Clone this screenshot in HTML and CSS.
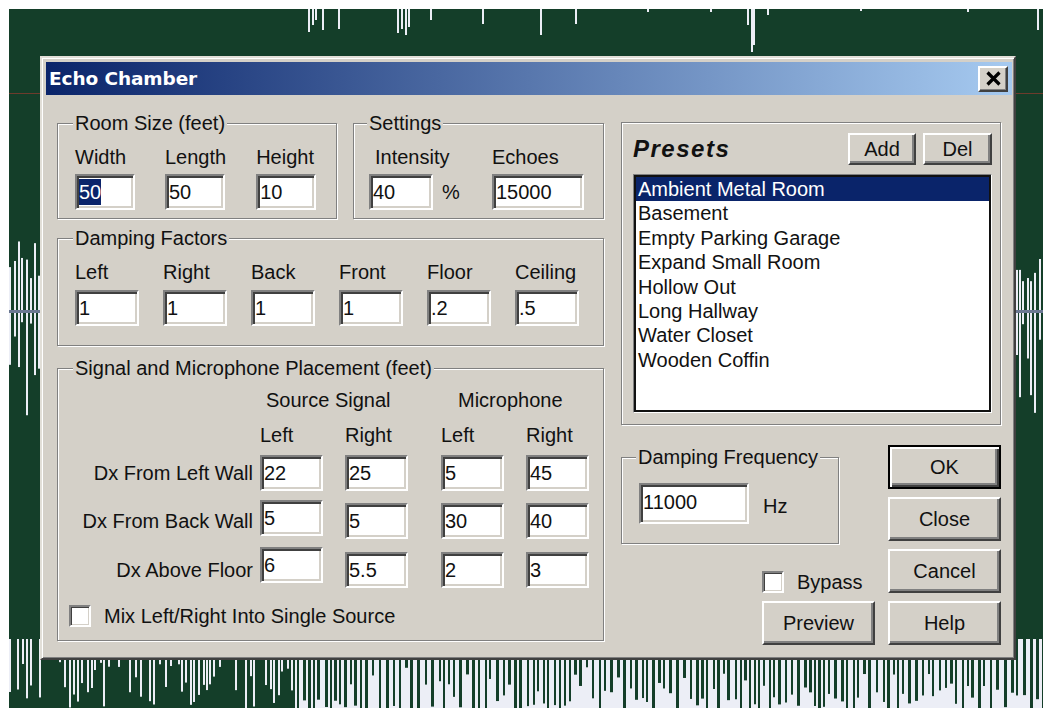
FILE: index.html
```html
<!DOCTYPE html>
<html lang="en">
<head>
<meta charset="utf-8">
<title>Echo Chamber</title>
<link rel="stylesheet" href="styles.css">
</head>
<body>
<div class="desktop">
  <svg id="wave" class="wave" width="1034" height="699" viewBox="0 0 1034 699"></svg>

  <div class="window">
    <div class="titlebar">
      <span class="title">Echo Chamber</span>
      <span class="close">
        <svg width="17" height="15" viewBox="0 0 17 15"><path d="M2.5 1.5L14.5 13.5M14.5 1.5L2.5 13.5" stroke="#000" stroke-width="3.2"/></svg>
      </span>
    </div>

    <div class="content">
      <div class="left">
        <div class="toprow">
          <fieldset class="group room">
            <legend>Room Size (feet)</legend>
            <div class="trio">
              <div class="fld"><span class="lbl">Width</span><span class="edit w60"><span class="sel">50</span></span></div>
              <div class="fld"><span class="lbl">Length</span><span class="edit w60">50</span></div>
              <div class="fld"><span class="lbl">Height</span><span class="edit w60">10</span></div>
            </div>
          </fieldset>

          <fieldset class="group settings">
            <legend>Settings</legend>
            <div class="sgrid">
              <span class="lbl ind">Intensity</span><span></span><span class="lbl">Echoes</span>
              <span class="edit w64">40</span><span class="unit">%</span><span class="edit w92">15000</span>
            </div>
          </fieldset>
        </div>

        <fieldset class="group damping">
          <legend>Damping Factors</legend>
          <div class="six">
            <div class="fld"><span class="lbl">Left</span><span class="edit w64">1</span></div>
            <div class="fld"><span class="lbl">Right</span><span class="edit w64">1</span></div>
            <div class="fld"><span class="lbl">Back</span><span class="edit w64">1</span></div>
            <div class="fld"><span class="lbl">Front</span><span class="edit w64">1</span></div>
            <div class="fld"><span class="lbl">Floor</span><span class="edit w64">.2</span></div>
            <div class="fld"><span class="lbl">Ceiling</span><span class="edit w64">.5</span></div>
          </div>
        </fieldset>

        <fieldset class="group placement">
          <legend>Signal and Microphone Placement (feet)</legend>
          <div class="ptable">
            <span></span><span class="head src">Source Signal</span><span class="head mic">Microphone</span>

            <span></span><span class="lbl">Left</span><span class="lbl">Right</span><span class="lbl">Left</span><span class="lbl">Right</span>

            <span class="rl">Dx From Left Wall</span>
            <span class="edit w63">22</span><span class="edit w63">25</span><span class="edit w63">5</span><span class="edit w63">45</span>

            <span class="rl">Dx From Back Wall</span>
            <span class="edit w63 up3">5</span><span class="edit w63">5</span><span class="edit w63">30</span><span class="edit w63">40</span>

            <span class="rl">Dx Above Floor</span>
            <span class="edit w63 up5">6</span><span class="edit w63">5.5</span><span class="edit w63">2</span><span class="edit w63">3</span>
          </div>
          <div class="check mix"><span class="box"></span><span>Mix Left/Right Into Single Source</span></div>
        </fieldset>
      </div>

      <div class="right">
        <div class="presets">
          <div class="phead">
            <span class="ptitle">Presets</span>
            <button class="btn add">Add</button>
            <button class="btn del">Del</button>
          </div>
          <ul class="list">
            <li class="on">Ambient Metal Room</li>
            <li>Basement</li>
            <li>Empty Parking Garage</li>
            <li>Expand Small Room</li>
            <li>Hollow Out</li>
            <li>Long Hallway</li>
            <li>Water Closet</li>
            <li>Wooden Coffin</li>
          </ul>
        </div>

        <div class="lower">
          <div class="lowleft">
            <fieldset class="group freq">
              <legend>Damping Frequency</legend>
              <div class="frow"><span class="edit w110">11000</span><span class="hz">Hz</span></div>
            </fieldset>
            <div class="check bypass"><span class="box"></span><span>Bypass</span></div>
            <button class="btn preview">Preview</button>
          </div>
          <div class="actions">
            <button class="btn default">OK</button>
            <button class="btn">Close</button>
            <button class="btn">Cancel</button>
            <button class="btn">Help</button>
          </div>
        </div>
      </div>
    </div>
  </div>
</div>
<script src="wave.js"></script>
</body>
</html>
```

FILE: styles.css
```css
* { box-sizing: border-box; }

html, body {
  margin: 0;
  background: #fff;
}

body {
  font-family: "Liberation Sans", Arial, sans-serif;
  font-size: 20px;
  color: #111;
}

/* waveform track behind the dialog */
.desktop {
  position: relative;
  width: 1034px;
  height: 699px;
  margin: 9px 0 0 9px;
  background: #143e29;
  overflow: hidden;
}

.wave { display: block; }

/* dialog window */
.window {
  position: absolute;
  left: 31px;
  top: 47px;
  width: 976px;
  height: 604px;
  display: flex;
  flex-direction: column;
  background: #d4d0c8;
  border: 2px solid;
  border-color: #e2dfd8 #404040 #404040 #e2dfd8;
  box-shadow: inset 1px 1px 0 #fff, inset -1px -1px 0 #808080;
  padding: 4px 2px 2px 4px;
}

.titlebar {
  height: 33px;
  flex: none;
  display: flex;
  align-items: center;
  justify-content: space-between;
  padding: 0 4px 0 3px;
  background: linear-gradient(to right, #0a246a, #a6caf0);
}

.title {
  color: #fff;
  font-family: "DejaVu Sans", sans-serif;
  font-weight: bold;
  font-size: 18.5px;
  letter-spacing: -0.1px;
}

.close {
  width: 30px;
  height: 26px;
  display: flex;
  align-items: center;
  justify-content: center;
  background: #d4d0c8;
  border: 2px solid;
  border-color: #fff #404040 #404040 #fff;
  box-shadow: inset -1px -1px 0 #808080;
}

.content {
  display: flex;
  gap: 17px;
  padding: 17px 0 0 11px;
}

.left {
  width: 547px;
  display: flex;
  flex-direction: column;
}

.toprow {
  display: flex;
  gap: 16px;
}

/* etched group boxes */
.group {
  margin: 0;
  min-width: 0;
  border: 1px solid #808080;
  box-shadow: inset 1px 1px 0 #fff, 1px 1px 0 #fff;
  padding: 12px 0 0 17px;
}

.group > legend {
  padding: 0 2px;
  margin-left: -2px;
  line-height: 22px;
  background: #d4d0c8;
  white-space: nowrap;
}

.lbl {
  display: block;
  line-height: 22px;
  white-space: nowrap;
}

/* sunken edit fields */
.edit {
  display: block;
  height: 36px;
  background: #fff;
  border: 2px solid;
  border-color: #808080 #fff #fff #808080;
  box-shadow: inset 2px 2px 0 #404040, inset -2px -2px 0 #d4d0c8;
  padding-left: 2px;
  line-height: 32px;
  white-space: nowrap;
  overflow: hidden;
}

.w60 { width: 60px; }
.w63 { width: 63px; }
.w64 { width: 64px; }
.w92 { width: 92px; }
.w110 { width: 110px; height: 41px; line-height: 35px; }

.sel {
  display: inline-block;
  background: #0a246a;
  color: #fff;
  line-height: 26px;
  vertical-align: middle;
  margin-top: -3px;
}

.room { width: 280px; height: 107px; }
.settings { width: 251px; height: 107px; padding-left: 15px; }

.trio {
  display: flex;
  gap: 30px;
}

.fld {
  display: flex;
  flex-direction: column;
  gap: 6px;
}

.sgrid {
  display: grid;
  grid-template-columns: 64px 59px 92px;
  row-gap: 6px;
}

.ind { margin-left: 6px; }

.unit {
  align-self: center;
  padding-left: 9px;
}

.damping {
  width: 547px;
  height: 119px;
  margin-top: 8px;
}

.damping .fld { gap: 7px; }

.six {
  display: grid;
  grid-template-columns: repeat(6, 64px);
  column-gap: 24px;
}

.placement {
  width: 547px;
  height: 284px;
  margin-top: 11px;
  padding-top: 10px;
}

.ptable {
  display: grid;
  grid-template-columns: 185px 85px 96px 85px 63px;
  grid-template-rows: 35px 31px 48px 49px 35px;
  align-items: start;
}

.head { line-height: 22px; white-space: nowrap; }
.src { grid-column: span 2; padding-left: 6px; }
.mic { grid-column: span 2; padding-left: 17px; }

.rl {
  text-align: right;
  padding-right: 7px;
  line-height: 36px;
  white-space: nowrap;
}

.up3 { margin-top: -3px; }
.up5 { margin-top: -5px; }

/* check boxes */
.check {
  display: flex;
  align-items: center;
  gap: 13px;
  line-height: 22px;
}

.box {
  width: 22px;
  height: 22px;
  flex: none;
  background: #fff;
  border: 2px solid;
  border-color: #808080 #fff #fff #808080;
  box-shadow: inset 1px 1px 0 #404040, inset -1px -1px 0 #d4d0c8;
}

.mix { margin: 18px 0 0 -6px; }

/* right column */
.right {
  width: 380px;
  margin-top: 10px;
}

.presets {
  height: 303px;
  border: 1px solid #808080;
  box-shadow: inset 1px 1px 0 #fff, 1px 1px 0 #fff;
  padding: 10px 8px 10px 11px;
}

.phead {
  height: 32px;
  display: flex;
  align-items: center;
  gap: 7px;
}

.ptitle {
  margin-right: auto;
  font-weight: bold;
  font-style: italic;
  font-size: 24px;
  letter-spacing: 1.5px;
}

.btn {
  font: inherit;
  color: #111;
  margin: 0;
  padding: 0;
  background: #d4d0c8;
  border: 2px solid;
  border-color: #fff #404040 #404040 #fff;
  box-shadow: inset -2px -2px 0 #808080;
  text-align: center;
}

.add { width: 68px; height: 32px; }
.del { width: 69px; height: 32px; }

.list {
  list-style: none;
  margin: 9px 0 0;
  padding: 2px;
  height: 239px;
  background: #fff;
  border: 1px solid;
  border-color: #808080 #fff #fff #808080;
  box-shadow: inset 0 0 0 2px #111;
}

.list li {
  line-height: 24.4px;
  padding-left: 2px;
  white-space: nowrap;
}

.list li.on {
  background: #0a246a;
  color: #fff;
}

.lower {
  display: flex;
  gap: 13px;
  margin-top: 20px;
}

.lowleft {
  width: 254px;
  display: flex;
  flex-direction: column;
  align-items: flex-start;
}

.freq {
  width: 218px;
  height: 98px;
  margin-top: 1px;
  padding: 15px 0 0 17px;
}

.freq > legend { margin-left: -3px; }

.frow {
  display: flex;
  align-items: center;
}

.hz {
  margin: 5px 0 0 14px;
}

.bypass { margin: 27px 0 0 141px; }

.preview {
  width: 113px;
  height: 44px;
  margin: 8px 0 0 141px;
}

.actions {
  width: 113px;
  height: 200px;
  display: flex;
  flex-direction: column;
  justify-content: space-between;
}

.actions .btn { height: 44px; }

.btn.default {
  border-color: #000;
  box-shadow: inset 2px 2px 0 #fff, inset -2px -2px 0 #404040, inset -4px -4px 0 #808080;
}
```

FILE: wave.js
```js
// Draws the audio waveform track that the dialog sits on top of.
(function () {
  var svg = document.getElementById('wave');
  var NS = 'http://www.w3.org/2000/svg';
  var W = 1034, H = 699, MID = 302;
  var LINE = '#eceef6', BG = '#143e29';
  var seed = 48271;

  function rnd() {
    seed = (seed * 16807) % 2147483647;
    return (seed - 1) / 2147483646;
  }

  function bar(x, y, w, h, fill) {
    var r = document.createElementNS(NS, 'rect');
    r.setAttribute('x', x);
    r.setAttribute('y', y);
    r.setAttribute('width', w);
    r.setAttribute('height', h);
    r.setAttribute('fill', fill);
    svg.appendChild(r);
  }

  // peaks around the centre line at the left and right edges
  function edgeBand(x0, x1) {
    for (var x = x0; x < x1; ) {
      var up = 25 + rnd() * 50;
      var down = 10 + Math.pow(rnd(), 1.3) * 120;
      bar(x, MID - up, 2, up + down, LINE);
      x += 3 + Math.floor(rnd() * 3);
    }
  }
  edgeBand(0, 31);
  edgeBand(1007, W);

  // short peaks clipping the top edge: [x, length]
  var tops = [
    [299, 23], [303, 16], [306, 11], [313, 21], [329, 20],
    [388, 24], [392, 20], [396, 26], [399, 18], [421, 11],
    [473, 15], [531, 26], [566, 15], [638, 3], [701, 3],
    [738, 16], [742, 43], [744, 36], [758, 6], [851, 2],
    [958, 3], [1028, 21]
  ];
  tops.forEach(function (t) { bar(t[0], 0, 2, t[1], LINE); });

  // peaks along the bottom edge: sparse on the left, dense further right
  var BASE = 630;
  for (var x = 0; x < 286; ) {
    if (rnd() < 0.7) bar(x, BASE, 2, 21 + rnd() * 50, LINE);
    x += 3 + Math.floor(rnd() * 4);
  }
  bar(286, BASE, W - 286, H - BASE, LINE);
  for (var x2 = 288; x2 < W; ) {
    var w = 2 + Math.floor(rnd() * 2);
    var len = 6 + Math.pow(rnd(), 0.6) * 50;
    bar(x2, BASE, w, 21 + len, BG);
    x2 += w + 2 + Math.floor(rnd() * 4);
  }

  // centre line and channel marker
  bar(0, MID - 1, W, 3, '#6b7892');
  bar(0, 84, W, 1, '#6d3b2c');
})();
```
